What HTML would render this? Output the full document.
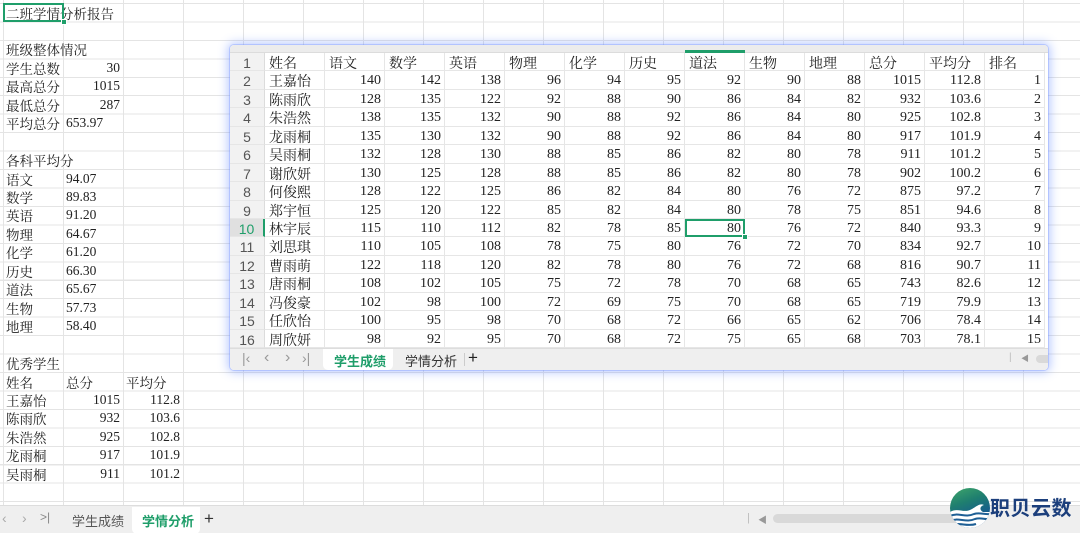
<!DOCTYPE html>
<html><head><meta charset="utf-8"><style>
*{margin:0;padding:0;box-sizing:border-box}
body{width:1080px;height:533px;overflow:hidden;background:#fff;position:relative;font-family:"Liberation Serif","Noto Serif CJK SC",serif;font-size:13.5px;color:#222}
#bg{position:absolute;left:0;top:0;width:1080px;height:505px;
background:
repeating-linear-gradient(to right,#e4e4e4 0 1px,transparent 1px 60px) 3px 0/1080px 505px no-repeat,
repeating-linear-gradient(to bottom,#e4e4e4 0 1px,transparent 1px 18.45px) 0 2.5px/1080px 505px no-repeat;}
.br{position:absolute;left:3px;height:18.45px;display:flex;line-height:18.45px;white-space:nowrap;margin-top:1px}
.br span{width:60px;padding:0 3px}
.br span:first-child,.br span.c{padding-top:2px}
.r{text-align:right}
#win{position:absolute;left:230px;top:45px;width:818px;height:325px;background:#fff;border-radius:4px;
box-shadow:0 0 0 1px rgba(120,150,255,.35),0 0 10px 2px rgba(90,130,255,.45);overflow:hidden}
#win .top{height:8px;background:#ececec;border-bottom:1px solid #dcdcdc;position:relative}
.wr{display:flex;height:18.45px;line-height:18.4px;font-size:14px}
.wr span{width:60px;border-right:1px solid #e6e6e6;border-bottom:1px solid #e6e6e6;padding:1px 3px 0;text-align:right;white-space:nowrap}
.wr span.n{width:35px;background:#f2f2f2;color:#555;text-align:center;font-family:"Liberation Sans",sans-serif;font-size:14px;border-right:1px solid #dcdcdc}
.wr span.l{text-align:left;padding-left:4px;padding-top:3px}
.wtabs{position:absolute;left:0;top:303px;width:818px;height:22px;background:#efefef;border-top:1px solid #ddd;font-family:"Liberation Sans","Noto Sans CJK SC",sans-serif;font-size:13px}
.btabs{position:absolute;left:0;top:505px;width:1080px;height:28px;background:#efefef;border-top:1px solid #ddd;font-family:"Liberation Sans","Noto Sans CJK SC",sans-serif;font-size:13px}
.t{position:absolute;color:#444}
</style></head><body>
<div id="bg"></div>
<div class="br" style="top:2.5px"><span style="width:140px">二班学情分析报告</span></div>
<div style="position:absolute;left:3px;top:3px;width:61px;height:19px;border:2px solid #1f9e6a"></div>
<div style="position:absolute;left:61px;top:19px;width:6px;height:6px;background:#1f9e6a;border:1px solid #fff"></div>
<div class="br" style="top:39.4px"><span style="width:120px">班级整体情况</span></div>
<div class="br" style="top:57.85px"><span>学生总数</span><span class="r">30</span></div>
<div class="br" style="top:76.3px"><span>最高总分</span><span class="r">1015</span></div>
<div class="br" style="top:94.75px"><span>最低总分</span><span class="r">287</span></div>
<div class="br" style="top:113.2px"><span>平均总分</span><span>653.97</span></div>
<div class="br" style="top:150.1px"><span style="width:120px">各科平均分</span></div>
<div class="br" style="top:168.55px"><span>语文</span><span>94.07</span></div>
<div class="br" style="top:187px"><span>数学</span><span>89.83</span></div>
<div class="br" style="top:205.45px"><span>英语</span><span>91.20</span></div>
<div class="br" style="top:223.9px"><span>物理</span><span>64.67</span></div>
<div class="br" style="top:242.35px"><span>化学</span><span>61.20</span></div>
<div class="br" style="top:260.8px"><span>历史</span><span>66.30</span></div>
<div class="br" style="top:279.25px"><span>道法</span><span>65.67</span></div>
<div class="br" style="top:297.7px"><span>生物</span><span>57.73</span></div>
<div class="br" style="top:316.15px"><span>地理</span><span>58.40</span></div>
<div class="br" style="top:353.05px"><span>优秀学生</span></div>
<div class="br" style="top:371.5px"><span>姓名</span><span class="c">总分</span><span class="c">平均分</span></div>
<div class="br" style="top:389.95px"><span>王嘉怡</span><span class="r">1015</span><span class="r">112.8</span></div>
<div class="br" style="top:408.4px"><span>陈雨欣</span><span class="r">932</span><span class="r">103.6</span></div>
<div class="br" style="top:426.85px"><span>朱浩然</span><span class="r">925</span><span class="r">102.8</span></div>
<div class="br" style="top:445.3px"><span>龙雨桐</span><span class="r">917</span><span class="r">101.9</span></div>
<div class="br" style="top:463.75px"><span>吴雨桐</span><span class="r">911</span><span class="r">101.2</span></div>
<div class="br" style="top:500.65px"><span style="width:120px">班级潜力学生</span></div>

<div class="btabs">
<span class="t" style="left:2px;top:4px;color:#aaa;font-size:14px">‹</span>
<span class="t" style="left:22px;top:4px;color:#aaa;font-size:14px">›</span>
<span class="t" style="left:40px;top:4px;color:#888;font-size:12px">&gt;|</span>
<span class="t" style="left:72px;top:5px;color:#555">学生成绩</span>
<div style="position:absolute;left:132px;top:1px;width:68px;height:27px;background:#fff;border-radius:0 0 5px 5px"></div>
<span class="t" style="left:142px;top:5px;color:#1f9e6a;font-weight:bold">学情分析</span>
<span class="t" style="left:204px;top:3px;color:#333;font-size:17px">+</span>
<span class="t" style="left:747px;top:6px;color:#bbb;font-size:11px">|</span>
<span class="t" style="left:758px;top:7px;color:#999;font-size:9px">◀</span>
<div style="position:absolute;left:773px;top:8px;width:200px;height:9px;background:#d9d9d9;border-radius:5px"></div>
</div>

<div style="position:absolute;left:950px;top:488px;width:40px;height:40px;border-radius:50%;overflow:hidden;background:linear-gradient(160deg,#3fa66a 0%,#1f7f6f 35%,#165b8f 70%,#1d4a8a 100%)">
<svg width="40" height="40" viewBox="0 0 40 40"><path d="M0 24 C8 19 14 26 22 21 C27 18 30 15 34 17 C30 18 29 22 33 24 L40 24 L40 40 L0 40Z" fill="#fff"/><path d="M0 28 C8 24 15 30 24 26 C30 24 35 27 40 26" stroke="#1e5f95" stroke-width="2" fill="none"/><path d="M0 33 C8 29 16 35 25 31 C31 29 35 32 40 31" stroke="#1e5f95" stroke-width="2" fill="none"/><path d="M2 37 C10 34 17 39 26 36" stroke="#1e5f95" stroke-width="2" fill="none"/></svg>
</div>
<div style="position:absolute;left:990px;top:494px;font-family:'Noto Sans CJK SC',sans-serif;font-weight:bold;font-size:20px;color:#1c3f7c;line-height:26px;letter-spacing:0.5px">职贝云数</div>

<div id="win">
<div class="top"><div style="position:absolute;left:455px;top:5px;width:60px;height:3px;background:#1f9e6a"></div></div>
<div class="wr"><span class="n">1</span><span class="l">姓名</span><span class="l">语文</span><span class="l">数学</span><span class="l">英语</span><span class="l">物理</span><span class="l">化学</span><span class="l">历史</span><span class="l">道法</span><span class="l">生物</span><span class="l">地理</span><span class="l">总分</span><span class="l">平均分</span><span class="l">排名</span></div>
<div class="wr"><span class="n">2</span><span class="l">王嘉怡</span><span>140</span><span>142</span><span>138</span><span>96</span><span>94</span><span>95</span><span>92</span><span>90</span><span>88</span><span>1015</span><span>112.8</span><span>1</span></div>
<div class="wr"><span class="n">3</span><span class="l">陈雨欣</span><span>128</span><span>135</span><span>122</span><span>92</span><span>88</span><span>90</span><span>86</span><span>84</span><span>82</span><span>932</span><span>103.6</span><span>2</span></div>
<div class="wr"><span class="n">4</span><span class="l">朱浩然</span><span>138</span><span>135</span><span>132</span><span>90</span><span>88</span><span>92</span><span>86</span><span>84</span><span>80</span><span>925</span><span>102.8</span><span>3</span></div>
<div class="wr"><span class="n">5</span><span class="l">龙雨桐</span><span>135</span><span>130</span><span>132</span><span>90</span><span>88</span><span>92</span><span>86</span><span>84</span><span>80</span><span>917</span><span>101.9</span><span>4</span></div>
<div class="wr"><span class="n">6</span><span class="l">吴雨桐</span><span>132</span><span>128</span><span>130</span><span>88</span><span>85</span><span>86</span><span>82</span><span>80</span><span>78</span><span>911</span><span>101.2</span><span>5</span></div>
<div class="wr"><span class="n">7</span><span class="l">谢欣妍</span><span>130</span><span>125</span><span>128</span><span>88</span><span>85</span><span>86</span><span>82</span><span>80</span><span>78</span><span>902</span><span>100.2</span><span>6</span></div>
<div class="wr"><span class="n">8</span><span class="l">何俊熙</span><span>128</span><span>122</span><span>125</span><span>86</span><span>82</span><span>84</span><span>80</span><span>76</span><span>72</span><span>875</span><span>97.2</span><span>7</span></div>
<div class="wr"><span class="n">9</span><span class="l">郑宇恒</span><span>125</span><span>120</span><span>122</span><span>85</span><span>82</span><span>84</span><span>80</span><span>78</span><span>75</span><span>851</span><span>94.6</span><span>8</span></div>
<div class="wr"><span class="n" style="background:#e0e0e0;color:#1f9e6a;border-right:2px solid #1f9e6a">10</span><span class="l">林宇辰</span><span>115</span><span>110</span><span>112</span><span>82</span><span>78</span><span>85</span><span style="outline:2px solid #1f9e6a;outline-offset:-2px;position:relative">80<i style="position:absolute;right:-4px;bottom:-4px;width:6px;height:6px;background:#1f9e6a;border:1px solid #fff"></i></span><span>76</span><span>72</span><span>840</span><span>93.3</span><span>9</span></div>
<div class="wr"><span class="n">11</span><span class="l">刘思琪</span><span>110</span><span>105</span><span>108</span><span>78</span><span>75</span><span>80</span><span>76</span><span>72</span><span>70</span><span>834</span><span>92.7</span><span>10</span></div>
<div class="wr"><span class="n">12</span><span class="l">曹雨萌</span><span>122</span><span>118</span><span>120</span><span>82</span><span>78</span><span>80</span><span>76</span><span>72</span><span>68</span><span>816</span><span>90.7</span><span>11</span></div>
<div class="wr"><span class="n">13</span><span class="l">唐雨桐</span><span>108</span><span>102</span><span>105</span><span>75</span><span>72</span><span>78</span><span>70</span><span>68</span><span>65</span><span>743</span><span>82.6</span><span>12</span></div>
<div class="wr"><span class="n">14</span><span class="l">冯俊豪</span><span>102</span><span>98</span><span>100</span><span>72</span><span>69</span><span>75</span><span>70</span><span>68</span><span>65</span><span>719</span><span>79.9</span><span>13</span></div>
<div class="wr"><span class="n">15</span><span class="l">任欣怡</span><span>100</span><span>95</span><span>98</span><span>70</span><span>68</span><span>72</span><span>66</span><span>65</span><span>62</span><span>706</span><span>78.4</span><span>14</span></div>
<div class="wr"><span class="n">16</span><span class="l">周欣妍</span><span>98</span><span>92</span><span>95</span><span>70</span><span>68</span><span>72</span><span>75</span><span>65</span><span>68</span><span>703</span><span>78.1</span><span>15</span></div>
<div class="wtabs">
<span class="t" style="left:12px;top:1px;color:#999;font-size:14px">|‹</span>
<span class="t" style="left:34px;top:0px;color:#999;font-size:16px">‹</span>
<span class="t" style="left:55px;top:0px;color:#999;font-size:16px">›</span>
<span class="t" style="left:72px;top:1px;color:#999;font-size:14px">›|</span>
<div style="position:absolute;left:93px;top:0;width:70px;height:21px;background:#fff;border-radius:0 0 5px 5px"></div>
<span class="t" style="left:104px;top:2px;color:#1f9e6a;font-weight:bold">学生成绩</span>
<span class="t" style="left:175px;top:2px;color:#333">学情分析</span>
<div style="position:absolute;left:234px;top:4px;width:1px;height:13px;background:#ccc"></div>
<span class="t" style="left:238px;top:-1px;color:#222;font-size:17px">+</span>
<span class="t" style="left:779px;top:3px;color:#bbb;font-size:10px">|</span>
<span class="t" style="left:791px;top:4px;color:#999;font-size:8px">◀</span>
<div style="position:absolute;left:806px;top:6px;width:20px;height:8px;background:#d9d9d9;border-radius:4px"></div>
</div>
</div>
</body></html>
